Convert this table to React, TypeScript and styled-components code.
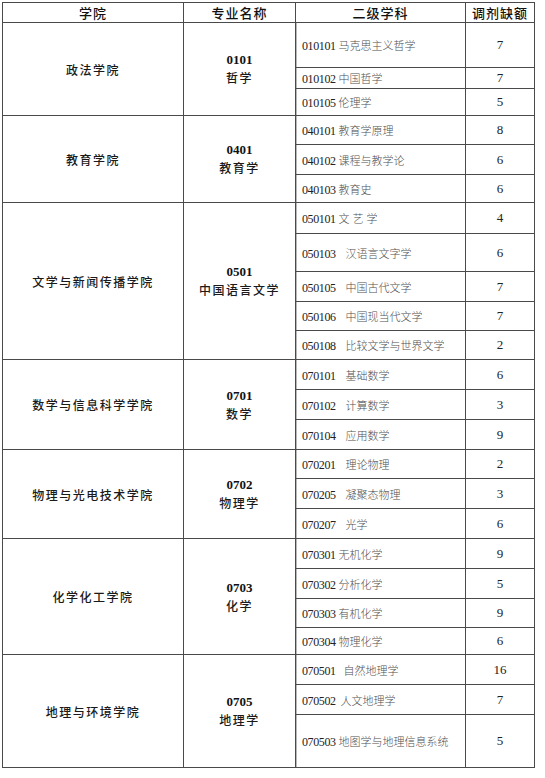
import React from "react";
import styled, { createGlobalStyle } from "styled-components";

const GlobalStyle = createGlobalStyle`
  html, body {
    margin: 0;
    padding: 0;
    background: #ffffff;
  }
  body {
    padding: 2px 0 0 2px;
    font-family: "Liberation Serif", "Noto Sans CJK SC", serif;
    color: #111;
  }
`;

const LINE = "#4a4a4a";

const Table = styled.table`
  border-collapse: collapse;
  table-layout: fixed;
  width: 528px;
  border: 1px solid ${LINE};
`;

const Th = styled.th<{ $w: number }>`
  width: ${(p) => p.$w}px;
  height: 19px;
  padding: 0;
  border: 1px solid ${LINE};
  font-family: "Noto Sans CJK SC", sans-serif;
  font-size: 13px;
  font-weight: 500;
  letter-spacing: 1px;
  line-height: 18px;
  text-align: center;
  color: #111;
`;

const Tr = styled.tr<{ $h: number }>`
  height: ${(p) => p.$h}px;
`;

const Td = styled.td`
  padding: 0;
  border: 1px solid ${LINE};
  vertical-align: middle;
`;

const CollegeCell = styled(Td)`
  text-align: center;
  font-family: "Noto Sans CJK SC", sans-serif;
  font-size: 12px;
  font-weight: 500;
  letter-spacing: 1.5px;
  color: #1a1a1a;
`;

const MajorCell = styled(Td)`
  text-align: center;
  line-height: 18px;
`;

const MajorCode = styled.div`
  font-family: "Liberation Serif", serif;
  font-size: 13px;
  font-weight: 700;
  color: #111;
`;

const MajorName = styled.div`
  font-family: "Noto Sans CJK SC", sans-serif;
  font-size: 12px;
  font-weight: 500;
  letter-spacing: 1.5px;
  color: #1a1a1a;
`;

const SubjectCell = styled(Td)`
  padding-left: 6px;
  box-shadow: inset 1px 0 0 #b8b8b8;
  white-space: nowrap;
`;

const SubjectCode = styled.span`
  font-family: "Liberation Serif", serif;
  font-size: 12px;
  letter-spacing: -0.4px;
  color: #222;
`;

const SubjectName = styled.span<{ $gap: number; $spaced?: boolean }>`
  margin-left: ${(p) => p.$gap}px;
  font-family: "Noto Sans CJK SC", sans-serif;
  font-size: 11px;
  font-weight: 300;
  letter-spacing: ${(p) => (p.$spaced ? "3px" : "0")};
  color: #505050;
`;

const QuotaCell = styled(Td)`
  text-align: center;
  font-family: "Liberation Serif", serif;
  font-size: 13px;
  color: #222;
`;

type Sub = {
  code: string;
  name: string;
  quota: number;
  h: number;
  gap?: number;
  spaced?: boolean;
};

type Group = {
  college: string;
  code: string;
  major: string;
  rows: Sub[];
};

const groups: Group[] = [
  {
    college: "政法学院",
    code: "0101",
    major: "哲学",
    rows: [
      { code: "010101", name: "马克思主义哲学", quota: 7, h: 45 },
      { code: "010102", name: "中国哲学", quota: 7, h: 21 },
      { code: "010105", name: "伦理学", quota: 5, h: 27 },
    ],
  },
  {
    college: "教育学院",
    code: "0401",
    major: "教育学",
    rows: [
      { code: "040101", name: "教育学原理", quota: 8, h: 29 },
      { code: "040102", name: "课程与教学论", quota: 6, h: 30 },
      { code: "040103", name: "教育史", quota: 6, h: 28 },
    ],
  },
  {
    college: "文学与新闻传播学院",
    code: "0501",
    major: "中国语言文学",
    rows: [
      { code: "050101", name: "文艺学", quota: 4, h: 31, spaced: true },
      { code: "050103", name: "汉语言文字学", quota: 6, h: 38, gap: 10 },
      { code: "050105", name: "中国古代文学", quota: 7, h: 30, gap: 10 },
      { code: "050106", name: "中国现当代文学", quota: 7, h: 29, gap: 10 },
      { code: "050108", name: "比较文学与世界文学", quota: 2, h: 29, gap: 10 },
    ],
  },
  {
    college: "数学与信息科学学院",
    code: "0701",
    major: "数学",
    rows: [
      { code: "070101", name: "基础数学", quota: 6, h: 30, gap: 10 },
      { code: "070102", name: "计算数学", quota: 3, h: 30, gap: 10 },
      { code: "070104", name: "应用数学", quota: 9, h: 30, gap: 10 },
    ],
  },
  {
    college: "物理与光电技术学院",
    code: "0702",
    major: "物理学",
    rows: [
      { code: "070201", name: "理论物理", quota: 2, h: 29, gap: 10 },
      { code: "070205", name: "凝聚态物理", quota: 3, h: 30, gap: 10 },
      { code: "070207", name: "光学", quota: 6, h: 30, gap: 10 },
    ],
  },
  {
    college: "化学化工学院",
    code: "0703",
    major: "化学",
    rows: [
      { code: "070301", name: "无机化学", quota: 9, h: 30 },
      { code: "070302", name: "分析化学", quota: 5, h: 30 },
      { code: "070303", name: "有机化学", quota: 9, h: 29 },
      { code: "070304", name: "物理化学", quota: 6, h: 27 },
    ],
  },
  {
    college: "地理与环境学院",
    code: "0705",
    major: "地理学",
    rows: [
      { code: "070501", name: "自然地理学", quota: 16, h: 30, gap: 8 },
      { code: "070502", name: "人文地理学", quota: 7, h: 30, gap: 5 },
      { code: "070503", name: "地图学与地理信息系统", quota: 5, h: 53 },
    ],
  },
];

const App: React.FC = () => {
  return (
    <>
      <GlobalStyle />
      <Table>
        <thead>
          <tr>
            <Th $w={180}>学院</Th>
            <Th $w={111}>专业名称</Th>
            <Th $w={169}>二级学科</Th>
            <Th $w={68}>调剂缺额</Th>
          </tr>
        </thead>
        <tbody>
          {groups.map((g) =>
            g.rows.map((r, i) => (
              <Tr key={r.code} $h={r.h}>
                {i === 0 && (
                  <>
                    <CollegeCell rowSpan={g.rows.length}>{g.college}</CollegeCell>
                    <MajorCell rowSpan={g.rows.length}>
                      <MajorCode>{g.code}</MajorCode>
                      <MajorName>{g.major}</MajorName>
                    </MajorCell>
                  </>
                )}
                <SubjectCell>
                  <SubjectCode>{r.code}</SubjectCode>
                  <SubjectName $gap={r.gap ?? 3} $spaced={r.spaced}>
                    {r.name}
                  </SubjectName>
                </SubjectCell>
                <QuotaCell>{r.quota}</QuotaCell>
              </Tr>
            ))
          )}
        </tbody>
      </Table>
    </>
  );
};

export default App;
